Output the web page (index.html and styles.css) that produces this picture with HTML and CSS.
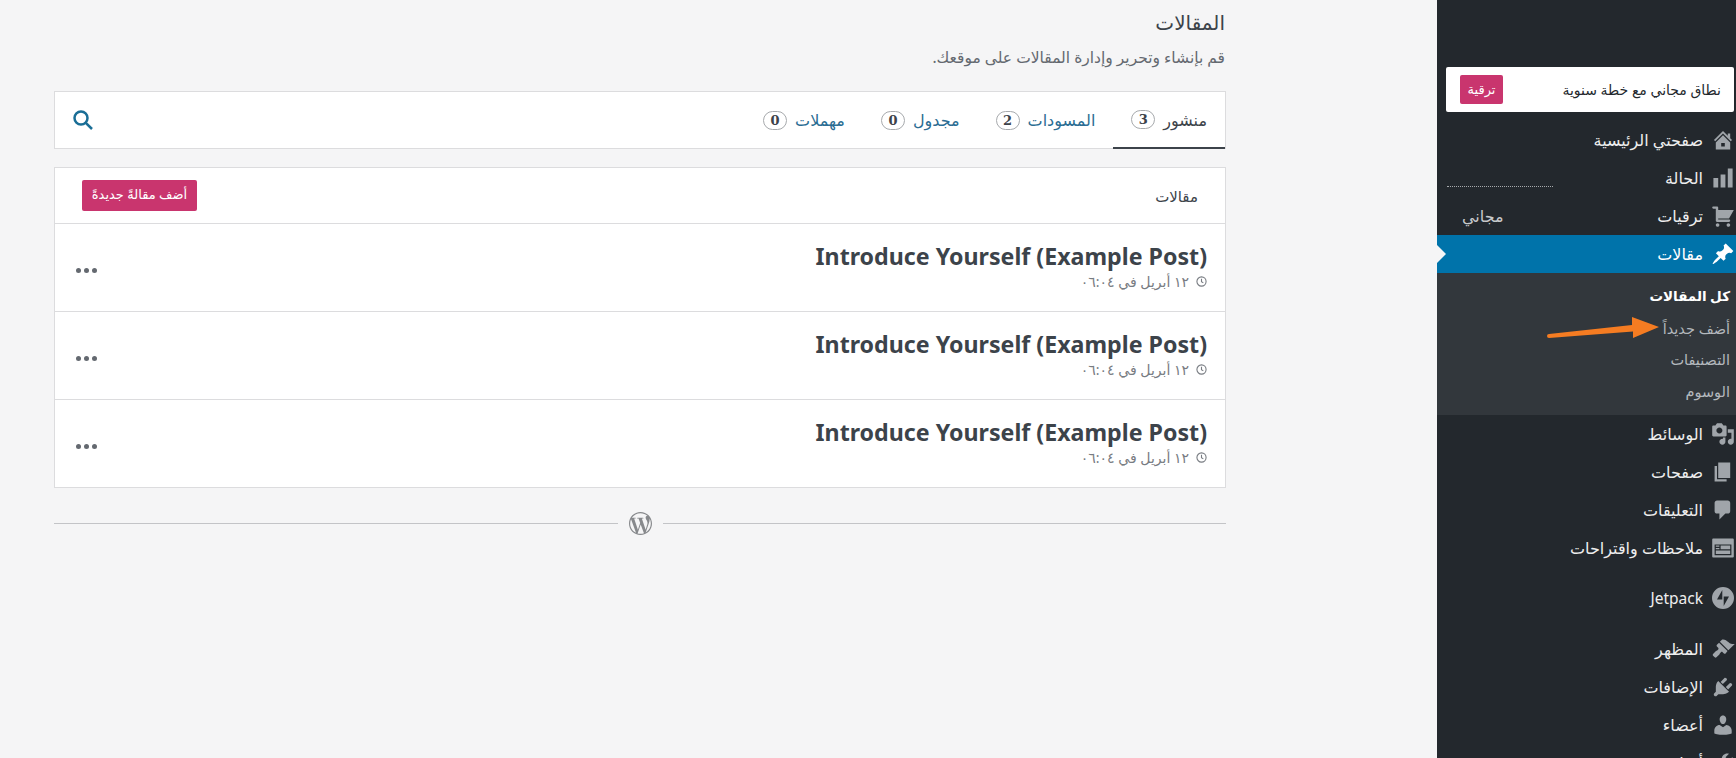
FILE: index.html
```html
<!DOCTYPE html>
<html lang="ar" dir="rtl">
<head>
    <meta charset="UTF-8">
    <meta name="viewport" content="width=device-width, initial-scale=1.0">
    <link rel="stylesheet" href="styles.css">
    <title>المقالات</title>
</head>
<body>
<div class="page">
    <aside class="sidebar">
        <div class="promo">
            <span class="promo-text">نطاق مجاني مع خطة سنوية</span>
            <a class="promo-btn">ترقية</a>
        </div>

        <nav class="menu">
            <a class="item">
                <svg class="icon" viewBox="0 0 20 20"><path fill-rule="evenodd" d="M16 8.500l1.530 1.530-1.060 1.060L10 4.620l-6.470 6.470-1.060-1.060L10 2.500l4 4v-2h2v4zM10 6.040l6 5.990V18H4v-5.970zM8.500 12.500v3h3v-3z"/></svg>
                <span>صفحتي الرئيسية</span>
            </a>
            <a class="item item-stats">
                <svg class="icon" viewBox="0 0 20 20"><path d="M18 18V2h-4v16h4zm-6 0V7H8v11h4zm-6 0v-8H2v8h4z"/></svg>
                <span>الحالة</span>
            </a>
            <a class="item">
                <svg class="icon" viewBox="0 0 20 20"><path d="M6 13h9c.550 0 1 .450 1 1s-.450 1-1 1H5c-.550 0-1-.450-1-1V4H2c-.550 0-1-.450-1-1s.450-1 1-1h3c.550 0 1 .450 1 1v2h13l-4 7H6v1zm-.500 3c.830 0 1.500.670 1.500 1.500S6.330 19 5.500 19 4 18.330 4 17.500 4.670 16 5.500 16zm9 0c.830 0 1.500.670 1.500 1.500s-.670 1.500-1.500 1.500-1.500-.670-1.500-1.500.670-1.500 1.500-1.500z"/></svg>
                <span>ترقيات</span>
                <span class="item-note">مجاني</span>
            </a>
            <a class="item item-active">
                <svg class="icon" viewBox="0 0 20 20"><path d="M10.440 3.020l1.820-1.820 6.360 6.350-1.830 1.820c-1.050-.680-2.480-.570-3.410.360l-.750.750c-.920.930-1.040 2.350-.350 3.410l-1.830 1.820-2.410-2.410-2.800 2.790c-.420.420-3.380 2.710-3.800 2.290s1.860-3.390 2.280-3.810l2.790-2.790L4.100 9.360l1.830-1.820c1.050.690 2.480.570 3.400-.360l.750-.750c.930-.920 1.050-2.350.360-3.410z"/></svg>
                <span>مقالات</span>
            </a>
            <div class="submenu">
                <a class="sub-item sub-current">كل المقالات</a>
                <a class="sub-item">أضف جديداً</a>
                <a class="sub-item">التصنيفات</a>
                <a class="sub-item">الوسوم</a>
            </div>
            <a class="item">
                <svg class="icon" viewBox="0 0 20 20"><path d="M13 11V4c0-.550-.450-1-1-1h-1.670L9 1H5L3.670 3H2c-.550 0-1 .450-1 1v7c0 .550.450 1 1 1h10c.550 0 1-.450 1-1zM7 4.500c1.380 0 2.500 1.120 2.500 2.500S8.380 9.500 7 9.500 4.500 8.380 4.500 7 5.620 4.500 7 4.500zM14 6h5v10.500c0 1.380-1.120 2.500-2.500 2.500S14 17.880 14 16.500s1.120-2.500 2.500-2.500c.170 0 .340.020.500.050V9h-3V6zm-4 8.050V13h2v3.500c0 1.380-1.120 2.500-2.500 2.500S7 17.880 7 16.500 8.120 14 9.500 14c.170 0 .340.020.500.050z"/></svg>
                <span>الوسائط</span>
            </a>
            <a class="item">
                <svg class="icon" viewBox="0 0 20 20"><path d="M6 15V2h10v13H6zm-1 1h8v2H3V5h2v11z"/></svg>
                <span>صفحات</span>
            </a>
            <a class="item">
                <svg class="icon" viewBox="0 0 20 20"><path d="M5 2h9c1.100 0 2 .900 2 2v7c0 1.100-.900 2-2 2h-2l-5 5v-5H5c-1.100 0-2-.900-2-2V4c0-1.100.900-2 2-2z"/></svg>
                <span>التعليقات</span>
            </a>
            <a class="item">
                <svg class="icon" viewBox="0 0 20 20"><path fill-rule="evenodd" d="M2 2h16c.550 0 1 .450 1 1v14c0 .550-.450 1-1 1H2c-.550 0-1-.450-1-1V3c0-.550.450-1 1-1zm15 14V7H3v9h14zM4 8v1h3V8H4zm4 0v3h8V8H8zm-4 2v1h3v-1H4zm0 2v3h12v-3H4z"/></svg>
                <span>ملاحظات واقتراحات</span>
            </a>
            <a class="item item-jetpack">
                <svg class="icon" viewBox="0 0 24 24"><path fill-rule="evenodd" d="M12 1a11 11 0 1 1 0 22 11 11 0 0 1 0-22zM11.300 4 6 13.500h5.300zM12.700 20 18 10.500h-5.300z"/></svg>
                <span>Jetpack</span>
            </a>
            <a class="item">
                <svg class="icon" viewBox="0 0 20 20"><path d="M14.480 11.060L7.410 3.990l1.500-1.500c.500-.560 2.300-.470 3.510.320 1.210.800 1.430 1.280 2.910 2.100 1.180.640 2.450 1.260 4.450.850zm-.710.710L6.700 4.700 4.930 6.470c-.390.390-.390 1.020 0 1.410l1.060 1.060c.390.390.390 1.030 0 1.420-.600.600-1.140 1.060-1.840 1.320l-2.440 2.440c-.390.390-.390 1.020 0 1.410l1.410 1.410c.390.390 1.020.390 1.410 0l2.440-2.440c.260-.700.720-1.240 1.320-1.840.390-.390 1.020-.390 1.410 0l1.060 1.060c.390.390 1.020.390 1.410 0z"/></svg>
                <span>المظهر</span>
            </a>
            <a class="item">
                <svg class="icon" viewBox="0 0 20 20"><path d="M13.110 4.360L9.870 7.600 8 5.730l3.240-3.240c.350-.340 1.050-.200 1.560.320.520.510.660 1.210.310 1.550zm-8 1.770l.910-1.120 9.010 9.010-1.190.840c-.710.710-2.630 1.160-3.820 1.160H6.140L4.900 17.260c-.590.590-1.540.590-2.120 0-.590-.580-.590-1.530 0-2.120l1.240-1.240v-3.880c0-1.130.460-3.050 1.090-3.890zm7.260 3.970l3.240-3.240c.340-.340 1.040-.200 1.560.310.510.520.650 1.220.310 1.560l-3.240 3.250z"/></svg>
                <span>الإضافات</span>
            </a>
            <a class="item">
                <svg class="icon" viewBox="0 0 20 20"><path d="M10 9.250c-2.270 0-2.730-3.440-2.730-3.440C7 4.020 7.820 2 9.970 2c2.160 0 2.980 2.020 2.710 3.810 0 0-.410 3.440-2.680 3.440zm0 2.570L12.720 10c2.390 0 4.520 2.330 4.520 4.530v2.490s-3.650 1.130-7.240 1.130c-3.650 0-7.240-1.130-7.240-1.130v-2.490c0-2.250 1.940-4.530 4.430-4.530z"/></svg>
                <span>أعضاء</span>
            </a>
            <a class="item">
                <svg class="icon" viewBox="0 0 20 20"><path d="M16.680 9.770c-1.340 1.340-3.300 1.670-4.950.990l-5.410 6.520c-.990.990-2.590.990-3.580 0s-.990-2.590 0-3.570l6.520-5.420c-.680-1.650-.350-3.610.990-4.950 1.280-1.280 3.120-1.640 4.730-1.070l-2.900 2.890 2.830 2.830 2.890-2.900c.570 1.610.210 3.450-1.070 4.730z"/></svg>
                <span>أدوات</span>
            </a>
        </nav>

        <!-- arrow someone drew on the screenshot -->
        <svg class="note-arrow" viewBox="0 0 114 24">
            <path d="M2 21 86 14.500V21L112 10 85 0v8L2 17a2 2 0 0 0 0 4z"/>
        </svg>
    </aside>

    <main class="content">
        <h1 class="page-title">المقالات</h1>
        <p class="page-desc">قم بإنشاء وتحرير وإدارة المقالات على موقعك.</p>

        <div class="tabs card">
            <a class="tab tab-active">منشور <span class="count">3</span></a>
            <a class="tab">المسودات <span class="count">2</span></a>
            <a class="tab">مجدول <span class="count">0</span></a>
            <a class="tab">مهملات <span class="count">0</span></a>
            <svg class="search" viewBox="0 0 20 20"><circle cx="8" cy="8" r="6.500"/><path d="M12.800 12.800 19 19"/></svg>
        </div>

        <div class="list card">
            <div class="list-head">
                <span>مقالات</span>
                <a class="add-btn">أضف مقالةً جديدةً</a>
            </div>
            <div class="row">
                <div class="row-main">
                    <h2 class="row-title">Introduce Yourself (Example Post)</h2>
                    <div class="row-meta">
                        <svg class="clock" viewBox="0 0 12 12"><circle cx="6" cy="6" r="5"/><path d="M6 3v3.200l2 1.300"/></svg>
                        <span>١٢ أبريل في ٠٦:٠٤</span>
                    </div>
                </div>
                <div class="dots"><i></i><i></i><i></i></div>
            </div>
            <div class="row">
                <div class="row-main">
                    <h2 class="row-title">Introduce Yourself (Example Post)</h2>
                    <div class="row-meta">
                        <svg class="clock" viewBox="0 0 12 12"><circle cx="6" cy="6" r="5"/><path d="M6 3v3.200l2 1.300"/></svg>
                        <span>١٢ أبريل في ٠٦:٠٤</span>
                    </div>
                </div>
                <div class="dots"><i></i><i></i><i></i></div>
            </div>
            <div class="row">
                <div class="row-main">
                    <h2 class="row-title">Introduce Yourself (Example Post)</h2>
                    <div class="row-meta">
                        <svg class="clock" viewBox="0 0 12 12"><circle cx="6" cy="6" r="5"/><path d="M6 3v3.200l2 1.300"/></svg>
                        <span>١٢ أبريل في ٠٦:٠٤</span>
                    </div>
                </div>
                <div class="dots"><i></i><i></i><i></i></div>
            </div>
        </div>

        <div class="foot">
            <span class="foot-line"></span>
            <svg class="wp-logo" viewBox="0 0 24 24"><path d="M21.469 6.825c.84 1.537 1.318 3.3 1.318 5.175 0 3.979-2.156 7.456-5.363 9.325l3.295-9.527c.615-1.54.82-2.771.82-3.864 0-.405-.026-.78-.07-1.11m-7.981.105c.647-.03 1.232-.105 1.232-.105.582-.075.514-.93-.067-.899 0 0-1.755.135-2.88.135-1.064 0-2.85-.15-2.85-.15-.585-.03-.661.855-.075.885 0 0 .54.061 1.125.09l1.68 4.605-2.37 7.08L5.354 6.9c.649-.03 1.234-.1 1.234-.1.585-.075.516-.93-.065-.896 0 0-1.746.138-2.874.138-.2 0-.438-.008-.69-.015C4.911 3.15 8.235 1.215 12 1.215c2.809 0 5.365 1.072 7.286 2.833-.046-.003-.091-.009-.141-.009-1.06 0-1.812.923-1.812 1.914 0 .89.513 1.643 1.06 2.531.411.72.89 1.643.89 2.977 0 .915-.354 1.994-.821 3.479l-1.075 3.585-3.9-11.61.001.014zM12 22.784c-1.059 0-2.081-.153-3.048-.437l3.237-9.406 3.315 9.087c.024.053.05.101.078.149-1.12.393-2.325.609-3.582.609M1.211 12c0-1.564.336-3.05.935-4.39L7.29 21.709C3.694 19.96 1.212 16.271 1.211 12M12 0C5.385 0 0 5.385 0 12s5.385 12 12 12 12-5.385 12-12S18.615 0 12 0"/></svg>
            <span class="foot-line"></span>
        </div>
    </main>
</div>
</body>
</html>
```

FILE: styles.css
```css
* {
    box-sizing: border-box;
}

html, body {
    height: 100%;
    margin: 0;
    overflow: hidden;
}

body {
    background: #f5f5f6;
    color: #3c434a;
    font-family: "Noto Sans", "DejaVu Sans", sans-serif;
    font-size: 16px;
}

a {
    color: inherit;
    text-decoration: none;
}

.page {
    display: flex;
    height: 100vh;
}

/* sidebar */
.sidebar {
    position: relative;
    width: 299px;
    flex: none;
    background: #23282d;
    color: #eee;
    padding-top: 67px;
}

.promo {
    display: flex;
    justify-content: space-between;
    align-items: center;
    height: 45px;
    margin: 0 2px 9px 9px;
    padding: 0 13px 0 11px;
    background: #fff;
    border-radius: 2px;
    color: #23282d;
    font-size: 14px;
}

.promo-btn {
    width: 43px;
    height: 29px;
    margin-left: 3px;
    background: #c9356e;
    border-radius: 2px;
    color: #fff;
    font-size: 13px;
    line-height: 28px;
    text-align: center;
}

.item {
    position: relative;
    display: flex;
    align-items: center;
    height: 38px;
    padding-right: 1px;
    font-size: 16px;
}

.icon {
    width: 24px;
    height: 24px;
    flex: none;
    margin-left: 8px;
    fill: #a0a5aa;
}

.item-note {
    position: absolute;
    left: 25px;
    color: #c8cacc;
}

.item-stats::after {
    content: "";
    position: absolute;
    left: 10px;
    top: 27px;
    width: 106px;
    border-top: 1px dotted #a7aaad;
}

.item-active {
    background: #0073aa;
    color: #fff;
}

.item-active .icon {
    fill: #fff;
}

.item-active::before {
    content: "";
    position: absolute;
    left: 0;
    top: 10px;
    border: 9px solid transparent;
    border-left-color: #f5f5f6;
    border-right-width: 0;
}

.submenu {
    padding: 8px 0;
    background: #32373c;
}

.sub-item {
    display: block;
    height: 31.600px;
    padding-right: 6px;
    color: #b4b9be;
    font-size: 14.500px;
    line-height: 31px;
}

.sub-current {
    color: #fff;
    font-weight: bold;
    font-size: 13.500px;
}

.item-jetpack {
    margin: 12px 0 13px;
    font-size: 15.500px;
}

.note-arrow {
    position: absolute;
    left: 110px;
    top: 317px;
    width: 114px;
    height: 24px;
    fill: #f57c22;
}

/* main column */
.content {
    flex: 1;
    padding: 0 211px 0 54px;
}

.page-title {
    margin: 10px 1px 0 0;
    font-size: 20px;
    font-weight: normal;
    line-height: 26px;
}

.page-desc {
    margin: 10px 1px 0 0;
    color: #646970;
    font-size: 15.500px;
    line-height: 22px;
}

.card {
    background: #fff;
    border: 1px solid #dcdcde;
}

.tabs {
    display: flex;
    align-items: stretch;
    height: 58px;
    margin-top: 23px;
}

.tab {
    display: flex;
    align-items: center;
    gap: 8px;
    padding: 0 18px;
    color: #2b6d93;
    font-size: 16px;
}

.tab-active {
    color: #3c434a;
    border-bottom: 2px solid #3c434a;
    margin-bottom: -1px;
}

.count {
    width: 24px;
    height: 19px;
    border: 1px solid #a7aaad;
    border-radius: 10px;
    color: #3c434a;
    font-family: "DejaVu Serif", serif;
    font-size: 13px;
    font-weight: bold;
    line-height: 17px;
    text-align: center;
}

.search {
    width: 20px;
    height: 20px;
    align-self: center;
    margin-right: auto;
    margin-left: 18px;
    fill: none;
    stroke: #1a6e96;
    stroke-width: 2.500;
}

.list {
    margin-top: 18px;
}

.list-head {
    display: flex;
    justify-content: space-between;
    align-items: center;
    height: 55px;
    padding: 0 27px 0 27px;
    font-size: 15px;
}

.add-btn {
    width: 115px;
    height: 31px;
    background: #c9356e;
    border-radius: 2px;
    color: #fff;
    font-size: 13px;
    line-height: 29px;
    text-align: center;
}

.row {
    display: flex;
    justify-content: space-between;
    align-items: center;
    height: 88px;
    padding: 0 18px 0 21px;
    border-top: 1px solid #dcdcde;
}

.row-main {
    margin-bottom: 5px;
}

.row-title {
    margin: 0;
    color: #3c434a;
    font-size: 23.200px;
    font-weight: bold;
    line-height: 30px;
}

.row-meta {
    display: flex;
    align-items: center;
    gap: 7px;
    margin-top: 3px;
    color: #787c82;
    font-size: 14px;
    line-height: 16px;
}

.clock {
    width: 11px;
    height: 11px;
    fill: none;
    stroke: #787c82;
    stroke-width: 1.200;
}

.dots {
    display: flex;
    gap: 3px;
    margin-top: 6px;
}

.dots i {
    width: 5px;
    height: 5px;
    border-radius: 50%;
    background: #646970;
}

.foot {
    display: flex;
    align-items: center;
    gap: 11px;
    margin-top: 24px;
}

.foot-line {
    flex: 1;
    border-top: 1px solid #c3c4c7;
}

.wp-logo {
    width: 23px;
    height: 23px;
    fill: #87898c;
}
```
